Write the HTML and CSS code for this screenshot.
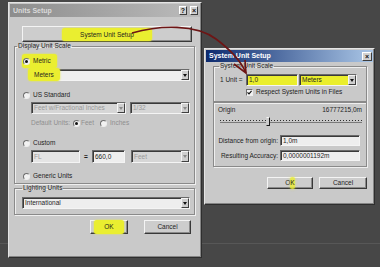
FILE: index.html
```html
<!DOCTYPE html>
<html lang="en">

<head>
    <meta charset="UTF-8">
    <title>Units Setup</title>
    <link rel="stylesheet" href="styles.css">
</head>

<body>
    <div class="win units">
        <div class="title">
            <span>Units Setup</span>
            <span class="tbtns"><span class="tbtn">?</span><span class="tbtn">×</span></span>
        </div>
        <div class="body">
            <div class="btn wide"><span class="mark">System Unit Setup</span></div>

            <fieldset class="group scale">
                <legend>Display Unit Scale</legend>
                <div class="opt"><span class="mark"><span class="radio on"></span>Metric</span></div>
                <div class="combo meters"><span class="val"><span class="mark">Meters</span></span><span class="drop"></span></div>
                <div class="opt"><span class="radio"></span>US Standard</div>
                <div class="row sub">
                    <div class="combo off w95"><span class="val">Feet w/Fractional Inches</span><span class="drop"></span></div>
                    <div class="combo off w60"><span class="val">1/32</span><span class="drop"></span></div>
                </div>
                <div class="row sub defaults">
                    Default Units:<span class="radio on first"></span>Feet<span class="radio second"></span>Inches
                </div>
                <div class="opt custom"><span class="radio"></span>Custom</div>
                <div class="row sub customrow">
                    <div class="field off fl">FL</div>
                    <span class="eq">=</span>
                    <div class="field num">660,0</div>
                    <div class="combo off w59"><span class="val">Feet</span><span class="drop"></span></div>
                </div>
                <div class="opt generic"><span class="radio"></span>Generic Units</div>
            </fieldset>

            <fieldset class="group lighting">
                <legend>Lighting Units</legend>
                <div class="combo intl"><span class="val">International</span><span class="drop"></span></div>
            </fieldset>

            <div class="actions">
                <div class="btn ok"><span class="mark">OK</span></div>
                <div class="btn cancel">Cancel</div>
            </div>
        </div>
    </div>

    <div class="win sys">
        <div class="title">
            <span>System Unit Setup</span>
            <span class="tbtns"><span class="tbtn">×</span></span>
        </div>
        <div class="body">
            <fieldset class="group unitscale">
                <legend>System Unit Scale</legend>
                <div class="row unitrow">
                    <span class="unitlabel">1 Unit =</span>
                    <div class="field hl w52">1,0</div>
                    <div class="combo hl w58"><span class="val">Meters</span><span class="drop"></span></div>
                </div>
                <div class="row checkrow">
                    <span class="check">
                        <svg width="5" height="5" viewBox="0 0 5 5"><path d="M0.5 2.3 L2 3.8 L4.6 0.8" fill="none" stroke="#111" stroke-width="1.2"/></svg>
                    </span>
                    Respect System Units in Files
                </div>
            </fieldset>

            <fieldset class="group origin">
                <div class="row originrow"><span>Origin</span><span>16777215,0m</span></div>
                <div class="slider"><span class="thumb"></span></div>
                <div class="row labeled first"><span class="lab">Distance from origin:</span><div class="field wide80">1,0m</div></div>
                <div class="row labeled"><span class="lab">Resulting Accuracy:</span><div class="field wide80">0,0000001192m</div></div>
            </fieldset>

            <div class="actions">
                <div class="btn ok2">O<span class="mark dot">K</span></div>
                <div class="btn cancel2">Cancel</div>
            </div>
        </div>
    </div>

    <svg class="arrow" width="380" height="267" viewBox="0 0 380 267">
        <path d="M132 33 C160 25 196 24 216 39 C232 51 241 61 246 73" fill="none" stroke="#6d1515" stroke-width="1.6"/>
        <path d="M234 64 L246 73 L245 60" fill="none" stroke="#6d1515" stroke-width="1.6"/>
    </svg>
</body>

</html>
```

FILE: styles.css
```css
* {
    box-sizing: border-box;
}

body {
    margin: 0;
    width: 380px;
    height: 267px;
    position: relative;
    overflow: hidden;
    background: linear-gradient(#474747 243px, #575757 243px, #575757 244px, #474747 244px);
    font-family: "Liberation Sans", Arial, sans-serif;
    font-size: 6.5px;
    line-height: 8px;
    color: #1e1e1e;
}

/* windows */
.win {
    position: absolute;
    display: flex;
    flex-direction: column;
    padding: 1px;
    background-color: #c9c9c9;
    border: 1px solid;
    border-color: #e4e4e4 #2e2e2e #2e2e2e #e4e4e4;
    box-shadow: inset -1px -1px #858585;
}

.units {
    left: 8px;
    top: 2px;
    width: 194px;
    height: 256px;
}

.sys {
    left: 204px;
    top: 48px;
    width: 171px;
    height: 157px;
}

.title {
    display: flex;
    align-items: center;
    justify-content: space-between;
    height: 13px;
    padding: 0 2px 0 3px;
    font-size: 7px;
    font-weight: bold;
}

.units .title {
    background: linear-gradient(to right, #8d8d8d, #bcbcbc);
    color: #dadada;
}

.sys .title {
    height: 12px;
    padding-right: 1px;
    background: linear-gradient(to right, #0c2a6e, #aac6e6);
    color: #fff;
}

.tbtns {
    display: flex;
}

.tbtn {
    display: flex;
    align-items: center;
    justify-content: center;
    width: 8px;
    height: 9px;
    margin-left: 3px;
    background-color: #d2d2d2;
    border: 1px solid;
    border-color: #fff #3c3c3c #3c3c3c #fff;
    color: #111;
    font-size: 7px;
    line-height: 1;
}

.sys .tbtn {
    width: 10px;
}

.body {
    flex: 1;
    display: flex;
    flex-direction: column;
    padding: 0 5px 0 4px;
}

.sys .body {
    padding: 0 6px 0 7px;
}

/* buttons */
.btn {
    display: flex;
    align-items: center;
    justify-content: center;
    background-color: #cdcdcd;
    border: 1px solid;
    border-color: #f4f4f4 #383838 #383838 #f4f4f4;
    box-shadow: inset -1px -1px #8a8a8a;
}

.wide {
    height: 16px;
    margin: 9px 3px 0 8px;
}

.actions {
    display: flex;
    justify-content: flex-end;
}

.units .actions {
    gap: 16px;
    height: 14px;
    margin: 5px 4px 0 0;
}

.ok {
    width: 38px;
}

.cancel {
    width: 47px;
}

.sys .actions {
    gap: 6px;
    height: 12px;
    margin-top: 10px;
}

.ok2 {
    width: 46px;
}

.cancel2 {
    width: 48px;
}

/* highlighter */
.mark {
    background-color: #eaee30;
    padding: 3px 6px;
    margin: 0 -6px;
    border-radius: 3px;
    box-shadow: 0 0 2px #eaee30;
}

.wide .mark {
    padding: 3px 18px 2px;
    margin: 0 -18px;
}

.opt .mark {
    display: flex;
    align-items: center;
    padding: 3px 6px 3px 1px;
    margin: -3px -6px -3px -1px;
}

.ok .mark {
    padding: 3px 10px;
    margin: 0 -10px;
}

.mark.dot {
    padding: 2px 0;
    margin: 0;
    border-radius: 2px;
    background-color: rgba(234, 238, 48, 0.8);
    box-shadow: 0 0 3px rgba(234, 238, 48, 0.6);
}

/* group boxes */
fieldset.group {
    display: flex;
    flex-direction: column;
    margin: 0;
    min-width: 0;
    border: 1px solid #8a8a8a;
    box-shadow: 1px 1px #efefef, inset 1px 1px #efefef;
}

legend {
    padding: 0 1px;
    line-height: 8px;
}

.scale {
    margin-top: 16px;
    padding: 0 4px 2px 8px;
}

.scale legend {
    margin-left: -6px;
}

.lighting {
    margin-top: 4px;
    padding: 0 4px 5px 7px;
}

.unitscale {
    margin-top: 8px;
    padding: 0 9px 5px 6px;
}

.unitscale legend {
    margin-left: -1px;
}

.origin {
    margin-top: 1px;
    padding: 0 4px 5px 4px;
}

/* rows */
.opt {
    display: flex;
    align-items: center;
    height: 10px;
    margin-top: 9px;
}

.scale .opt:first-of-type {
    margin-top: 6px;
}

.custom {
    margin-top: 10px;
}

.generic {
    margin-top: 8px;
}

.row {
    display: flex;
    align-items: center;
}

.sub {
    margin: 2px 0 0 8px;
    height: 12px;
}

.defaults {
    margin-top: 4px;
    height: 10px;
    color: #8f8f8f;
}

.customrow {
    height: 13px;
}

.eq {
    width: 12px;
    text-align: center;
    font-weight: bold;
}

/* radios and checkbox */
.radio {
    display: inline-flex;
    align-items: center;
    justify-content: center;
    width: 7px;
    height: 7px;
    margin-right: 3px;
    border-radius: 50%;
    background-color: #f2f2f2;
    border: 1px solid;
    border-color: #6e6e6e #eee #eee #6e6e6e;
}

.radio.on::after {
    content: "";
    width: 3px;
    height: 3px;
    border-radius: 50%;
    background-color: #111;
}

.radio.first {
    margin-left: 3px;
    margin-right: 1px;
}

.radio.second {
    margin-left: 6px;
}

.check {
    display: inline-flex;
    align-items: center;
    justify-content: center;
    width: 7px;
    height: 7px;
    margin-right: 3px;
    background-color: #f4f4f4;
    border: 1px solid;
    border-color: #6e6e6e #eee #eee #6e6e6e;
}

/* combos and fields */
.combo,
.field {
    display: flex;
    align-items: center;
    padding-left: 2px;
    background-color: #eeeeee;
    border: 1px solid;
    border-color: #6a6a6a #f4f4f4 #f4f4f4 #6a6a6a;
    box-shadow: inset 1px 1px #3a3a3a;
    white-space: nowrap;
    overflow: visible;
}

.combo .val {
    flex: 1;
    overflow: visible;
}

.drop {
    display: flex;
    align-items: center;
    justify-content: center;
    width: 8px;
    align-self: stretch;
    background-color: #cfcfcf;
    border: 1px solid;
    border-color: #f4f4f4 #404040 #404040 #f4f4f4;
}

.drop::after {
    content: "";
    border-top: 3px solid #111;
    border-left: 2px solid transparent;
    border-right: 2px solid transparent;
}

.meters {
    height: 12px;
    margin: 3px 0 0 8px;
}

.intl {
    height: 12px;
    margin-top: 5px;
}

.off {
    background-color: #d6d6d6;
    color: #9a9a9a;
}

.off .drop::after {
    border-top-color: #8a8a8a;
}

.w95 {
    width: 95px;
    height: 12px;
    margin-right: 4px;
}

.w60 {
    width: 60px;
    height: 12px;
}

.fl {
    width: 49px;
    height: 13px;
    background-color: #e4e4e4;
}

.num {
    width: 33px;
    height: 13px;
    margin-right: 6px;
}

.w59 {
    width: 59px;
    height: 13px;
}

/* system unit setup */
.unitrow {
    margin-top: 4px;
    height: 12px;
}

.unitlabel {
    width: 26px;
}

.hl {
    background-color: #eaee2c;
}

.w52 {
    width: 52px;
    height: 12px;
    margin-right: 1px;
}

.w58 {
    width: 58px;
    height: 12px;
}

.checkrow {
    height: 8px;
    margin: 2px 0 0 26px;
}

.originrow {
    justify-content: space-between;
    height: 8px;
    margin-top: 3px;
}

.slider {
    display: flex;
    align-items: center;
    height: 9px;
    margin: 3px 0 0 2px;
    background: repeating-linear-gradient(to right, #2c2c2c 0 1px, transparent 1px 3px) 0 3px / 100% 1px no-repeat,
        linear-gradient(#7a7a7a, #7a7a7a) 0 5px / 100% 1px no-repeat;
}

.thumb {
    width: 4px;
    height: 9px;
    margin-left: 46px;
    background-color: #cdcdcd;
    border: 1px solid;
    border-color: #f4f4f4 #1a1a1a #1a1a1a #cdcdcd;
}

.labeled {
    height: 11px;
    margin-top: 4px;
}

.labeled.first {
    margin-top: 9px;
}

.lab {
    width: 60px;
    margin-right: 2px;
    text-align: right;
}

.wide80 {
    width: 80px;
    height: 11px;
}

.arrow {
    position: absolute;
    left: 0;
    top: 0;
    z-index: 5;
    pointer-events: none;
}
```
